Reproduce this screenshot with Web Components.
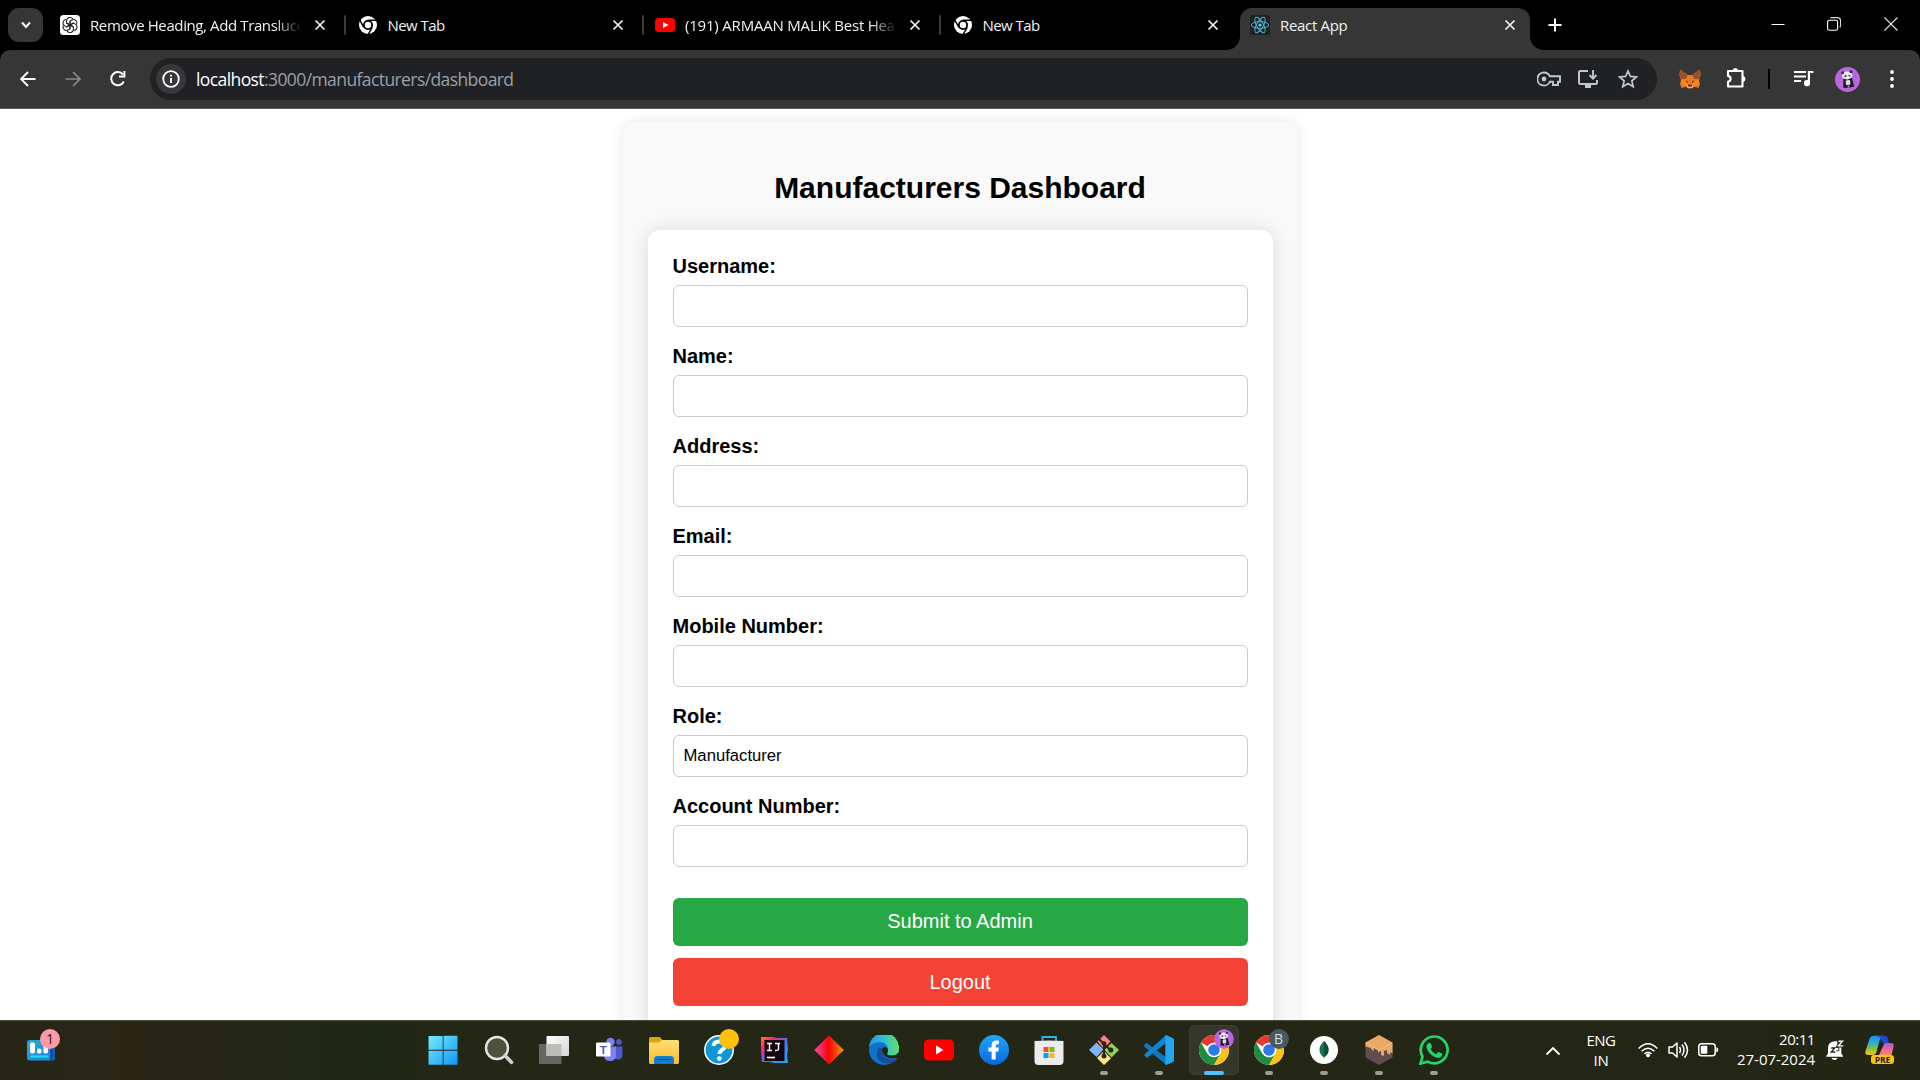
<!DOCTYPE html>
<html lang="en">
<head>
<meta charset="utf-8">
<title>React App</title>
<style>
html,body{margin:0;height:100%;overflow:hidden}
body{font-family:"Liberation Sans",Arial,sans-serif;background:#fff}
</style>
</head>
<body>
<desktop-screen></desktop-screen>
<script>
const chromeLogo = `<circle cx="15" cy="15" r="15" fill="#fff"/>
<path d="M15 15 2 7.5A15 15 0 0 1 28 7.5L15 7.5Z" fill="#e33b2e"/>
<path d="M2 7.5A15 15 0 0 0 15 30L21.5 18.8 15 15 8.5 18.8Z" fill="#1e8e3e"/>
<path d="M28 7.5A15 15 0 0 1 15 30L21.6 18.6 15 7.5Z" fill="#fbc116"/>
<circle cx="15" cy="15" r="7.3" fill="#fff"/><circle cx="15" cy="15" r="5.8" fill="#2c78e8"/>`;
const panda = `<g transform="rotate(-6 12.500 12.500)"><path d="M8.500 11.500h8.500l1.500 8.500q-6 2-11 0z" fill="#1a1a1a"/><path d="M10.500 13.500q2.300-1 4.500 0v4q-2.200 1-4.500 0z" fill="#ddd"/><path d="M11.800 18.500h2v2.300h-2z" fill="#b765e0"/><ellipse cx="12.600" cy="8.400" rx="5.300" ry="4" fill="#eee"/><circle cx="8.300" cy="5.200" r="1.500" fill="#333"/><circle cx="16.800" cy="5.200" r="1.500" fill="#333"/><path d="M9.300 9l2.200-1.500.8 1.200-1.800 1.300zM14 7.800l2 1-.5 1.200-1.700-.8z" fill="#333"/></g>`;
const ICONS = {
chevdown:[16,16,`<path d="M4 5.500l4 4.500 4-4.500" fill="none" stroke="#fff" stroke-width="2"/>`],
close:[12,12,`<path d="M1.500 1.500l9 9M10.500 1.500l-9 9" stroke="#f2f2f2" stroke-width="1.700"/>`],
plus:[14,14,`<path d="M7 .5v13M.5 7h13" stroke="#fff" stroke-width="2"/>`],
gpt:[20,20,`<rect width="20" height="20" rx="3.500" fill="#fff"/><g transform="translate(10 10)" fill="none" stroke="#222" stroke-width="1.050">${[0,60,120,180,240,300].map(a=>`<path transform="rotate(${a})" d="M-3.400-1.500V-4.200a3.400 3.400 0 0 1 6.300-1.700M-3.400-1.800L.1.200 3.400-1.800"/>`).join('')}</g>`],
chromew:[20,20,`<circle cx="10" cy="10" r="9" fill="#fff"/><circle cx="10" cy="10" r="5" fill="#000"/><circle cx="10" cy="10" r="3.200" fill="#fff"/><path d="M9.500 5.300H19M5.900 12.400L1.400 4.500M14.200 12.300L9.800 20" stroke="#000" stroke-width="1.500"/>`],
ytsmall:[20,20,`<rect y="3" width="20" height="14" rx="3.500" fill="#f00"/><path d="M8 7l5.500 3L8 13z" fill="#fff"/>`],
react:[20,20,`<rect width="20" height="20" rx="2" fill="#202124"/><g fill="none" stroke="#4ab4d0" stroke-width="1"><ellipse cx="10" cy="10" rx="8.700" ry="3.300"/><ellipse cx="10" cy="10" rx="8.700" ry="3.300" transform="rotate(60 10 10)"/><ellipse cx="10" cy="10" rx="8.700" ry="3.300" transform="rotate(120 10 10)"/></g><circle cx="10" cy="10" r="1.500" fill="#61dafb"/>`],
min:[14,14,`<path d="M.5 7.500h13" stroke="#fff"/>`],
restore:[14,14,`<rect x=".6" y="3.200" width="10" height="10" rx="1.800" fill="none" stroke="#fff" stroke-width="1.100"/><path d="M3.300 1.200Q4 .6 5 .6h5.500q3 0 3 3v5q0 1-.8 1.800" fill="none" stroke="#ddd" stroke-width="1.100"/>`],
winclose:[14,14,`<path d="M.5.500l13 13M13.500.500l-13 13" stroke="#ddd" stroke-width="1.100"/>`],
back:[16,16,`<path d="M15.500 8H1.500M8 1L1 8l7 7" fill="none" stroke="#fff" stroke-width="1.900"/>`],
fwd:[16,16,`<path d="M.5 8h14M8 1l7 7-7 7" fill="none" stroke="#8a8a8a" stroke-width="1.700"/>`],
reload:[16,16,`<path d="M13.800 10.500A6.600 6.600 0 1 1 13 3.600" fill="none" stroke="#fff" stroke-width="2"/><path d="M15.400 0v6.500H9V4.600h4.400V0z" fill="#fff"/>`],
info:[30,30,`<circle cx="15" cy="15" r="15" fill="#37383a"/><circle cx="15" cy="15" r="7.800" fill="none" stroke="#fff" stroke-width="1.800"/><path d="M15 14v5M15 10.800v1.800" stroke="#fff" stroke-width="1.900"/>`],
key:[24,16,`<path d="M7 1.500a6.500 6.500 0 1 0 5.800 9.300H16V14h5v-3.200h2V5.300H12.800A6.500 6.500 0 0 0 7 1.500z" fill="none" stroke="#c4c7c5" stroke-width="1.900"/><circle cx="7" cy="8" r="2.400" fill="#c4c7c5"/>`],
install:[22,20,`<path d="M11 2H3.500Q2 2 2 3.500v10Q2 15 3.500 15h15q1.500 0 1.500-1.500V11" fill="none" stroke="#c4c7c5" stroke-width="2"/><path d="M8 15h6v4H8z" fill="#c4c7c5"/><path d="M16 1v8M12.500 6l3.500 3.700L19.500 6" fill="none" stroke="#c4c7c5" stroke-width="1.900"/>`],
star:[20,20,`<path d="M10 2l2.400 5.400 6 .6-4.500 3.900 1.300 5.800-5.200-3.100-5.200 3.100 1.300-5.800L1.600 8l6-.6z" fill="none" stroke="#c4c7c5" stroke-width="1.700"/>`],
fox:[22,20,`<path d="M1 .5l8 5.500h4l8-5.500.5 6-1.500 4.500 1 4-1.500 4-4.500-1.200L13 19.500H9l-2-1.700L2.500 19 1 15l1-4L.5 6.500z" fill="#e8791d"/><path d="M1 .5l7.500 5.500L7 10H2L.5 6.500zM21 .5L13.500 6l1.500 4h5l1.500-3.500z" fill="#9a5127"/><path d="M2 11h5l2 5-2 1.800-4.500-2zM20 11h-5l-2 5 2 1.800 4.500-2z" fill="#f6851b"/><path d="M6 11.500l3 1-.3 1.500zM16 11.500l-3 1 .3 1.500z" fill="#3a2d24"/><path d="M8 16h6l-.7 2.800H8.700z" fill="#d8cabb"/><path d="M9.300 15.800h3.400l.3 1.700H9z" fill="#222"/>`],
puzzle:[22,22,`<path d="M2 4h14.500v15.500H2v-4.800q2.600-.4 2.600-2.900T2 8.900z" fill="none" stroke="#fff" stroke-width="2.100" stroke-linejoin="round"/><path d="M6.800 4a2.500 2.500 0 0 1 5 0zM16.500 9.300a2.600 2.600 0 0 1 0 5.200z" fill="#fff" stroke="#fff" stroke-width=".8"/>`],
music:[21,18,`<path d="M1 2h12M1 6.500h12M1 11h7" stroke="#fff" stroke-width="2.100"/><path d="M15.900 13V2h4.500" fill="none" stroke="#fff" stroke-width="2.200"/><circle cx="14" cy="13.200" r="3.100" fill="#fff"/>`],
avatar:[25,25,`<circle cx="12.500" cy="12.500" r="12.500" fill="#b765e0"/>${panda}`],
dots:[6,20,`<g fill="#fff"><circle cx="3" cy="3" r="1.900"/><circle cx="3" cy="10" r="1.900"/><circle cx="3" cy="17" r="1.900"/></g>`],
widget:[28,21,`<defs><linearGradient id="g" x2="1" y2="1"><stop stop-color="#22acd0"/><stop offset="1" stop-color="#287de0"/></linearGradient></defs><rect width="28" height="20.500" rx="3" fill="url(#g)"/><path d="M24 0h1q3 0 3 3v14.500q0 3-3 3h-1z" fill="#0c5eb5"/><path d="M24 5v15.500" stroke="#092d60"/><rect x="3" y="2.500" width="5" height="11" rx="2" fill="#fff"/><rect x="10" y="8.500" width="4.500" height="5" rx="1.800" fill="#fff"/><rect x="16.500" y="4" width="4.500" height="9.500" rx="1.800" fill="#fff"/><rect x="3" y="15.500" width="18.500" height="2" rx="1" fill="#1adcff"/>`],
start:[30,30,`<defs><linearGradient id="g" gradientUnits="userSpaceOnUse" x1="0" y1="0" x2="29" y2="29"><stop stop-color="#75eeff"/><stop offset="1" stop-color="#1398fb"/></linearGradient></defs><path d="M1 1h13.700v13.700H.5V1.500zM15.500.7H29q.5 0 .5.500v13.500h-14zM.5 15.700h14.200v14H1q-.5 0-.5-.5zM15.500 15.700h14v13.500q0 .5-.5.500H15.500z" fill="url(#g)"/>`],
search:[30,30,`<circle cx="13" cy="13" r="11" fill="#4d523f" stroke="#e4e6e3" stroke-width="2.400"/><path d="M21 20.500l6.500 6.800" stroke="#cfd3d5" stroke-width="3.600" stroke-linecap="round"/>`],
taskview:[30,30,`<defs><linearGradient id="g" x2="1" y2="1"><stop stop-color="#fff"/><stop offset="1" stop-color="#d5d5d5"/></linearGradient></defs><rect x="0" y="9" width="22.500" height="20" rx="1" fill="#666764"/><rect x="7.500" y="1" width="22.500" height="20" rx="1" fill="url(#g)"/><path d="M7.500 9h15v12H8.500q-1 0-1-1z" fill="#bcbcbb"/>`],
teams:[30,30,`<circle cx="16.500" cy="7" r="4.200" fill="#7b83eb"/><circle cx="25" cy="7" r="2.900" fill="#5059c9"/><path d="M20 11.500h8.500v8q0 5-4.500 5-3 0-4-2z" fill="#5059c9"/><path d="M10 11.500h12v8.500q0 6-6 6t-6-6z" fill="#7b83eb"/><rect x="2" y="7.500" width="14.500" height="14" rx="1" fill="#fff"/><text x="9.300" y="18.800" text-anchor="middle" font-size="11.500" font-weight="700" fill="#5059c9" font-family="Liberation Sans">T</text>`],
folder:[30,30,`<defs><linearGradient id="g" x2="0" y2="1"><stop stop-color="#ffdf70"/><stop offset="1" stop-color="#f8bd36"/></linearGradient></defs><path d="M0 3.500Q0 2 1.500 2H10q1 0 1.700.8L13.500 5 10 12H0z" fill="#e3a012"/><path d="M0 7.500h9.500L13 5h15.500Q30 5 30 6.500v21q0 1.500-1.500 1.500h-27Q0 29 0 27.500z" fill="url(#g)"/><path d="M5 29v-4.500Q5 21 8.500 21h13q3.500 0 3.500 3.500V29z" fill="#137dcd"/><path d="M8.500 24.500h13" stroke="#0a4f96"/>`],
help:[30,30,`<circle cx="15" cy="15" r="14.200" fill="#0d96d8" stroke="#fff" stroke-width="1.500"/><path d="M9.500 11q.3-4.500 5.800-4.500t5.600 4.200q0 2.500-3 4.300-2.400 1.500-2.400 4" fill="none" stroke="#fff" stroke-width="3.800"/><circle cx="15.300" cy="23.600" r="2.400" fill="#fff"/>`],
ij:[30,30,`<defs><linearGradient id="g" x2="1" y2="1"><stop stop-color="#ff7a1a"/><stop offset=".25" stop-color="#fb2a74"/><stop offset=".55" stop-color="#3d7bff"/><stop offset="1" stop-color="#1ba8f5"/></linearGradient></defs><path d="M2 2h12l4 1h10l1 12-1 5 1 8H15l-4-1H3L2 15z" fill="url(#g)"/><rect x="5.500" y="5" width="20" height="21" fill="#14040f"/><path d="M8 8.500h5M10.500 8.500v7M8 15.500h5M16 8.500h5M19.500 8.500v5.200q0 2-3.500 1.800" stroke="#fff" stroke-width="1.400" fill="none"/><path d="M8 22.500h8" stroke="#fff" stroke-width="1.600"/>`],
diamond:[30,30,`<defs><linearGradient id="g"><stop stop-color="#f049b0"/><stop offset=".48" stop-color="#fa0505"/><stop offset=".7" stop-color="#f63b05"/><stop offset="1" stop-color="#f3a00c"/></linearGradient></defs><path d="M15 .5L29.800 15 15 29.500.2 15z" fill="url(#g)"/>`],
edge:[30,30,`<defs><linearGradient id="g"><stop stop-color="#2197dc"/><stop offset=".5" stop-color="#30c2d4"/><stop offset="1" stop-color="#65e05a"/></linearGradient></defs><circle cx="15" cy="15" r="15" fill="#1070ca"/><path d="M0 12A15 15 0 0 1 30 14q0 6.500-7 6.500-5 0-5-2 1-1.500 1-3.500 0-5.500-5-7.500Q7 5.500 0 12z" fill="url(#g)"/><path d="M9.500 12.500Q6 21 11 26q6 5.500 15.500.3 1.500-1.400 2-3-6 2.500-11 .2-4-2-5-5.500-.5-2.500.5-5z" fill="#134f98"/><path d="M18 18.500q1-1.500 1-3.500-.5-3-3.500-3-2.500.5-2.800 3 0 3.500 3.300 6.300 5 3.500 12.500 1.500L30 20v-3q-3 3.600-7 3.500-5 0-5-2z" fill="#232717"/>`],
yt:[30,30,`<rect y="4.500" width="30" height="21" rx="4.500" fill="#f00"/><path d="M12 10.500l7.500 4.500-7.500 4.500z" fill="#fff"/>`],
fb:[30,30,`<defs><linearGradient id="g" x2="0" y2="1"><stop stop-color="#1ba8fb"/><stop offset="1" stop-color="#0a66e0"/></linearGradient></defs><circle cx="15" cy="15" r="15" fill="url(#g)"/><path d="M12.600 24.500V16.500H9.400v-4h3.200V10q0-4.500 4.700-4.500 1.500 0 2.700.3V9.300h-1.700q-1.600 0-1.600 1.700v1.500h3.200l-.6 4h-2.600v8z" fill="#fff"/>`],
store:[30,30,`<path d="M8.500 8V2h13.500v6" fill="none" stroke="#29b6ef" stroke-width="1.800"/><path d="M.5 6Q15 5 29.500 6v20q0 4-4 4h-21q-4 0-4-4z" fill="#ececec"/><path d="M9.500 12h5v5h-5z" fill="#f25022"/><path d="M15.500 12h5v5h-5z" fill="#7fba00"/><path d="M9.500 18h5v5h-5z" fill="#00a4ef"/><path d="M15.500 18h5v5h-5z" fill="#ffb900"/>`],
git:[30,30,`<path d="M15 0l6.500 6.500-7 7L8.500 6.500z" fill="#ff8080"/><path d="M7.500 7.500l7 7-7 7.500L0 15z" fill="#80b3ff"/><path d="M22.500 8L30 15l-7.500 7.500-7-7.500z" fill="#8dd35f"/><path d="M15 16l7 7.500-7 6.500-7-7z" fill="#ffe680"/><path d="M10 4l5 5v13M15 9l6 5.500" fill="none" stroke="#2a2418" stroke-width="2"/><circle cx="15" cy="8.500" r="2.300" fill="#2a2418"/><circle cx="15" cy="21" r="2.500" fill="#2a2418"/><circle cx="21.800" cy="15" r="2.500" fill="#2a2418"/>`],
vscode:[30,30,`<path d="M0 10l2.500-2.200 20 14.700V30L.5 12z" fill="#0d77c2"/><path d="M22 0v8L3 23 .5 20.500Q0 20 .7 19.300z" fill="#1184cf"/><path d="M22 0l7 3.200q1 .5 1 1.600v20.500q0 1.100-1 1.600L22 30q-.7-.5-.7-1.500v-27Q21.300.5 22 0z" fill="#24a5ef"/>`],
chrome:[30,30,chromeLogo],
mongo:[30,30,`<circle cx="15" cy="15" r="14" fill="#fcfcfa"/><path d="M15 6q5 5 4.500 9.500Q19 19.500 15.500 22L15 24l-.5-2Q11 19.500 10.500 15.500 10 11 15 6z" fill="#10754f"/><path d="M15 6q5 5 4.500 9.500Q19 19.500 15.500 22z" fill="#074e39"/>`],
dirt:[30,30,`<path d="M15 0l13.500 7.500v15L15 30 1.500 22.500v-15z" fill="#624b51"/><path d="M15 0l13.500 7.500v11L26 17v3l-3-2v-3l-3 1v5l-3-1v-4l-3 1.500v-2L10 13v3l-3-2v-1l-5.500-1.500v-4z" fill="#e9a962"/><path d="M2 8l13 7 13-7" fill="none" stroke="#f3c07f" stroke-width="1"/>`],
whatsapp:[30,30,`<path d="M1.500 28.500l2-7A13.400 13.400 0 1 1 8.600 26.600z" fill="#222816" stroke="#25d366" stroke-width="2.700"/><path d="M9 8.500q1.500-1.500 2.800 0l1.200 3q0 1-1.500 2.500 2 3.800 5.500 5.200l2-2q.5-.5 1.300 0l2.900 1.400q.6.500 0 2-1.200 2.400-4 2.400Q14.500 22.500 10.500 18q-3.500-4-3-7 .3-1.500 1.500-2.500z" fill="#25d366"/>`],
chevup:[16,10,`<path d="M1.500 8.500L8 2l6.500 6.500" fill="none" stroke="#fff" stroke-width="1.900"/>`],
wifi:[20,16,`<g fill="none" stroke="#fff" stroke-width="1.500"><path d="M.7 6.500Q10-3 19.300 6.500" /><path d="M3.600 9.300q6.400-6.200 12.800 0"/><path d="M6.500 12q3.500-3.400 7 0"/></g><circle cx="10" cy="13.300" r="2" fill="#fff"/>`],
sound:[21,18,`<path d="M1 6h3.500L9 2v14l-4.500-4H1z" fill="none" stroke="#fff" stroke-width="1.500" stroke-linejoin="round"/><path d="M11.500 6q2 3 0 6M14 3.500q4 5.500 0 11M16.500 1.200q6 7.800 0 15.600" fill="none" stroke="#fff" stroke-width="1.500"/>`],
battery:[21,14,`<rect x=".8" y=".8" width="16.400" height="12" rx="2.800" fill="none" stroke="#fff" stroke-width="1.500"/><rect x="2.800" y="2.800" width="6.500" height="8" rx="1" fill="#fff"/><path d="M18.300 4.200q2 .3 2 2.600t-2 2.600z" fill="#fff"/>`],
bell:[18,20,`<path d="M2 13.500V8Q2 2 8.500 1.300h2.800V5h4v8.500L17 16v.8H.3V16z" fill="#fff"/><path d="M5.500 18h6q-.8 2-3 2t-3-2z" fill="#fff"/><path d="M5.200 8h3.600l-3.600 4h4" fill="none" stroke="#222816" stroke-width="1.300"/><path d="M10.300 7.500h2.500v3.300h-2.500" fill="none" stroke="#222816" stroke-width="1"/><path d="M12.500 1.500h4l-4 4.500h4.700" fill="none" stroke="#222816" stroke-width="3.200"/><path d="M12.500 1.200h4l-4 4.700h4.700" fill="none" stroke="#fff" stroke-width="1.400"/>`],
copilot:[30,30,`<defs><linearGradient id="g" x2="0" y2="1"><stop stop-color="#2388e6"/><stop offset=".35" stop-color="#1fb0d4"/><stop offset=".65" stop-color="#7fbe45"/><stop offset="1" stop-color="#f3c516"/></linearGradient><linearGradient id="h" x2="0" y2="1"><stop stop-color="#a557df"/><stop offset=".5" stop-color="#ed64a0"/><stop offset="1" stop-color="#f68d53"/></linearGradient></defs><path d="M9 .8h9.500q-3 1-4 5l-3 11.200q-1 3-4 3H3q-3.500 0-2.500-4L4.500 4Q5.500.8 9 .8z" fill="url(#g)"/><path d="M14 .8h5.500q2.500 0 3.300 3l1 4.200h-4q-2.600 0-3.800-2.500-.8-3.700-4-4.700z" fill="#2049d6"/><path d="M19.500 8H26q3.500 0 2.500 4l-2 8H14z" fill="url(#h)"/>`]
};

const define = (name, html, setup) => {
  const t = document.createElement('template');
  t.innerHTML = html;
  customElements.define(name, class extends HTMLElement {
    connectedCallback() {
      if (this.shadowRoot) return;
      const root = this.attachShadow({ mode: 'open' });
      root.append(t.content.cloneNode(true));
      if (setup) setup(this, root);
    }
  });
};

define('ui-icon', `<style>:host{display:block;flex:none;line-height:0}svg{display:block}</style>`, (el, root) => {
  const [w, h, body] = ICONS[el.getAttribute('name')];
  root.innerHTML += `<svg width="${w}" height="${h}" viewBox="0 0 ${w} ${h}">${body}</svg>`;
});

/* One line of interface text; "fit" spreads letters to the given advance width. */
define('fit-text', `<style>:host{display:inline-block;white-space:pre}span{display:inline-block}</style><span><slot></slot></span>`, (el, root) => {
  const s = root.querySelector('span');
  const w = s.getBoundingClientRect().width;
  s.style.letterSpacing = ((+el.getAttribute('fit') - w) / el.textContent.length) + 'px';
});

define('browser-tab', `<style>
:host{display:flex;flex:none;box-sizing:border-box;width:297.500px;height:42px;align-items:center;padding:0 0 8px 10px;position:relative;color:#f1f1f1;font:15px "Open Sans",sans-serif}
.title{width:210px;margin:0 10px 0 10px;overflow:hidden;white-space:pre;line-height:22px}
:host([fade]) .title{-webkit-mask:linear-gradient(90deg,#000 185px,transparent 212px);mask:linear-gradient(90deg,#000 185px,transparent 212px)}
.close{display:flex;width:20px;justify-content:center}
.bar{width:2px;height:20px;margin-left:14px;border-radius:1px;background:#3c3c3c}
:host([active]){width:290px;background:#363636;border-radius:12px 12px 0 0}
:host([active]) .bar,:host([last]) .bar{display:none}
:host([active])::before,:host([active])::after{content:"";position:absolute;bottom:0;width:13px;height:13px}
:host([active])::before{right:100%;background:radial-gradient(circle at 0 0,#0000 12.500px,#363636 13px)}
:host([active])::after{left:100%;background:radial-gradient(circle at 100% 0,#0000 12.500px,#363636 13px)}
</style><slot name="icon"></slot><div class="title"><slot></slot></div><div class="close"><ui-icon name="close"></ui-icon></div><div class="bar"></div>`);

define('tab-strip', `<style>
:host{display:flex;height:42px;padding-top:8px;background:#000;align-items:flex-start}
.menu{display:flex;width:35px;height:34px;margin:0 7px 0 8px;border-radius:11px;background:#363636;align-items:center;justify-content:center}
.plus{margin:10px 0 0 18px}
.win{display:flex;margin:9px 22px 0 auto;gap:43.500px}
.win :first-child{margin-right:-1.500px}
</style>
<div class="menu"><ui-icon name="chevdown"></ui-icon></div>
<browser-tab fade><ui-icon slot="icon" name="gpt"></ui-icon><fit-text fit="214.500">Remove Heading, Add Transluce</fit-text></browser-tab>
<browser-tab><ui-icon slot="icon" name="chromew"></ui-icon><fit-text fit="57">New Tab</fit-text></browser-tab>
<browser-tab fade><ui-icon slot="icon" name="ytsmall"></ui-icon><fit-text fit="210">(191) ARMAAN MALIK Best Hea</fit-text></browser-tab>
<browser-tab last><ui-icon slot="icon" name="chromew"></ui-icon><fit-text fit="57">New Tab</fit-text></browser-tab>
<browser-tab active><ui-icon slot="icon" name="react"></ui-icon><fit-text fit="67.500">React App</fit-text></browser-tab>
<ui-icon class="plus" name="plus"></ui-icon>
<div class="win"><ui-icon name="min"></ui-icon><ui-icon name="restore"></ui-icon><ui-icon name="winclose"></ui-icon></div>`);

define('address-bar', `<style>
:host{display:block;background:#000}
.bar{display:flex;box-sizing:border-box;height:59px;align-items:center;background:#363636;border-radius:10px 10px 0 0;border-bottom:1px solid #5d5a5b;padding:0 25px 0 19.500px}
.nav{display:flex;gap:29px;width:130.500px;flex:none}
.omni{display:flex;box-sizing:border-box;width:1507px;height:42px;flex:none;border-radius:21px;background:#202124;align-items:center;padding:0 19.500px 0 6px;font:17.500px "Open Sans",sans-serif;color:#9aa0a6}
.url{margin:0 auto 0 10px}b{font-weight:400;color:#fff}
.acts{display:flex;align-items:center;gap:19px}
.acts :first-child{margin-right:-3px}
.ext{display:flex;align-items:center;padding-left:22px}
.puzzle{margin-left:25px;margin-bottom:2px}
.sep{width:2px;height:20px;background:#000;margin:0 23px 0 20px}
.avatar{margin:0 29px 0 21px}
.music{margin-bottom:1px}
</style>
<div class="bar"><div class="nav"><ui-icon name="back"></ui-icon><ui-icon name="fwd"></ui-icon><ui-icon name="reload"></ui-icon></div>
<div class="omni"><ui-icon name="info"></ui-icon><div class="url"><fit-text fit="317.500"><b>localhost</b>:3000/manufacturers/dashboard</fit-text></div>
<div class="acts"><ui-icon name="key"></ui-icon><ui-icon name="install"></ui-icon><ui-icon name="star"></ui-icon></div></div>
<div class="ext"><ui-icon name="fox"></ui-icon><ui-icon class="puzzle" name="puzzle"></ui-icon><div class="sep"></div><ui-icon class="music" name="music"></ui-icon><ui-icon class="avatar" name="avatar"></ui-icon><ui-icon name="dots"></ui-icon></div></div>`);

define('form-field', `<style>
:host{display:flex;flex-direction:column;gap:8px}
label{margin-left:-.5px;font:bold 20px/22px "Liberation Sans",Arial,sans-serif;color:#000}
.box{box-sizing:border-box;height:42px;border:1px solid #ccc;border-radius:6px;background:#fff;padding:0 9.500px;font:16.667px/39px "Liberation Sans",Arial,sans-serif;color:#000}
</style><label></label><div class="box"><slot></slot></div>`, (el, root) => {
  root.querySelector('label').textContent = el.getAttribute('label');
});

define('form-button', `<style>
:host{display:block;height:48px;border-radius:6px;background:var(--fill);color:#fff;text-align:center;font:20px/var(--line) "Liberation Sans",Arial,sans-serif}
span{margin-right:1px}
</style><span><slot></slot></span>`);

define('dashboard-page', `<style>
:host{display:block;flex:1;overflow:hidden;background:#fff}
.card{box-sizing:border-box;width:675px;height:1000px;margin:13px 0 0 623px;padding:25px;border-radius:12px;background:#f9f9f9;box-shadow:0 0 12.500px rgba(0,0,0,.1)}
h2{margin:24px 1px 25px 0;font:bold 30px/34px "Liberation Sans",Arial,sans-serif;text-align:center;color:#000}
.form{box-sizing:border-box;height:830px;padding:25px;border-radius:12px;background:#fff;box-shadow:0 0 18px rgba(0,0,0,.13)}
.fields{display:flex;flex-direction:column;gap:18px;margin-bottom:31px}
.buttons{display:flex;flex-direction:column;gap:12px}
.ok{--fill:#28a745;--line:47px}.out{--fill:#f44336;--line:49px}
</style>
<div class="card"><h2>Manufacturers Dashboard</h2><div class="form"><div class="fields">
<form-field label="Username:"></form-field><form-field label="Name:"></form-field><form-field label="Address:"></form-field><form-field label="Email:"></form-field><form-field label="Mobile Number:"></form-field><form-field label="Role:">Manufacturer</form-field><form-field label="Account Number:"></form-field>
</div><div class="buttons"><form-button class="ok">Submit to Admin</form-button><form-button class="out">Logout</form-button></div></div></div>`);

define('task-item', `<style>
:host{display:flex;flex:none;width:55px;height:59px;align-items:center;justify-content:center;position:relative}
.plate{display:flex;box-sizing:border-box;width:50px;height:50px;margin-bottom:1px;border-radius:6px;align-items:center;justify-content:center}
:host([active]) .plate{background:#34372a;border:1px solid #3d4033}
:host([open])::after{content:"";position:absolute;bottom:5px;width:8px;height:4px;border-radius:2px;background:#9b9c94}
:host([active])::after{width:20px;background:#4cc2ff}
.badge{position:absolute;left:27.500px;top:8px;width:20px;height:20px;border-radius:50%;overflow:hidden;font:14px/20px "Open Sans",sans-serif;text-align:center}
</style><div class="plate"></div>`, (el, root) => {
  root.querySelector('.plate').innerHTML = `<ui-icon name="${el.getAttribute('icon')}"></ui-icon>`;
  const b = el.getAttribute('badge');
  if (!b) return;
  const d = document.createElement('div');
  d.className = 'badge';
  if (b === 'dot') d.style.background = '#ffc107';
  else if (b === 'panda') d.innerHTML = `<svg width="20" height="20" viewBox="0 0 25 25"><circle cx="12.500" cy="12.500" r="12.500" fill="#b765e0"/>${panda}</svg>`;
  else { d.textContent = b; d.style.background = '#455a64'; d.style.color = '#d7dde0'; }
  root.append(d);
});

define('task-bar', `<style>
:host{display:flex;box-sizing:border-box;height:60px;border-top:1px solid #4b4d3f;background:linear-gradient(90deg,#262716 0,#2a2616 130px,#252616 230px,#1f2715 370px,#232715 430px,#252616 1100px,#242615 1920px);color:#fff;font:15px/20px "Open Sans",sans-serif;align-items:center}
.widgets{position:relative;box-sizing:border-box;width:415px;padding-left:27px}
.num{position:absolute;left:40px;top:-11px;width:20px;height:20px;border-radius:50%;background:#ff99a4;color:#222;font:14px/20px "Open Sans",sans-serif;text-align:center}
.apps{display:flex}
.apps :first-child{margin-right:1px}
.tray{display:flex;flex:1;align-items:center;padding-left:84px}
.lang{width:30px;text-align:center;margin:0 22px 2px 25px}
.status{display:flex;align-items:center;gap:9.500px;width:79px;margin-bottom:1px}
.clock{text-align:right;width:98px;white-space:nowrap;margin-bottom:4px}
.bell{margin-left:11px;margin-bottom:1px}
.co{position:relative;margin-left:21px;margin-bottom:1px}
.pre{position:absolute;left:6px;top:19.500px;width:23px;height:9.500px;border-radius:3px;background:#ffc20e;color:#222;font:bold 8.500px/9.500px "Open Sans",sans-serif;text-align:center}
</style>
<div class="widgets"><ui-icon name="widget"></ui-icon><div class="num">1</div></div>
<div class="apps"><task-item icon="start"></task-item><task-item icon="search"></task-item><task-item icon="taskview"></task-item><task-item icon="teams"></task-item><task-item icon="folder"></task-item><task-item icon="help" badge="dot"></task-item><task-item icon="ij"></task-item><task-item icon="diamond"></task-item><task-item icon="edge"></task-item><task-item icon="yt"></task-item><task-item icon="fb"></task-item><task-item icon="store"></task-item><task-item icon="git" open></task-item><task-item icon="vscode" open></task-item><task-item icon="chrome" badge="panda" open active></task-item><task-item icon="chrome" badge="B" open></task-item><task-item icon="mongo" open></task-item><task-item icon="dirt" open></task-item><task-item icon="whatsapp" open></task-item></div>
<div class="tray"><ui-icon name="chevup"></ui-icon><div class="lang"><fit-text fit="29">ENG</fit-text><br><fit-text fit="15">IN</fit-text></div>
<div class="status"><ui-icon name="wifi"></ui-icon><ui-icon name="sound"></ui-icon><ui-icon name="battery"></ui-icon></div>
<div class="clock"><fit-text fit="36">20:11</fit-text><br><fit-text fit="78">27-07-2024</fit-text></div>
<ui-icon class="bell" name="bell"></ui-icon><div class="co"><ui-icon name="copilot"></ui-icon><div class="pre">PRE</div></div></div>`);

define('desktop-screen', `<style>:host{display:flex;flex-direction:column;width:1920px;height:1080px;overflow:hidden;background:#fff}</style>
<tab-strip></tab-strip><address-bar></address-bar><dashboard-page></dashboard-page><task-bar></task-bar>`);
</script>
</body>
</html>
